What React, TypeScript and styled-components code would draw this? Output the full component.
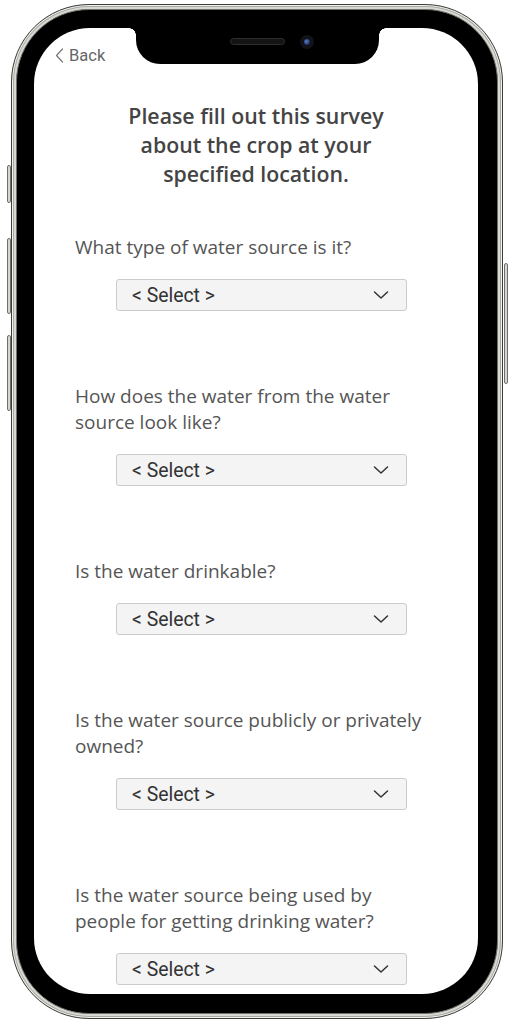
import { createGlobalStyle } from "styled-components"
import styled from "styled-components"

const GlobalStyle = createGlobalStyle`
  html, body {
    margin: 0;
    padding: 0;
    background: #ffffff;
  }
  * {
    box-sizing: border-box;
  }
`

const questions = [
  "What type of water source is it?",
  "How does the water from the water source look like?",
  "Is the water drinkable?",
  "Is the water source publicly or privately owned?",
  "Is the water source being used by people for getting drinking water?",
]

const Stage = styled.div`
  width: 512px;
  height: 1024px;
  padding: 4px 0 0 11px;
  overflow: hidden;
`

const Frame = styled.div`
  position: relative;
  width: 492px;
  height: 1015px;
  border-radius: 78px;
  border: 1px solid #3c3c3c;
  background: #d9d9d3;
  padding: 4px;
  box-shadow: inset 0 0 0 1px #f2f2ee, inset 0 0 0 2px #a9a9a4;
`

const SideButton = styled.div<{ $side: "left" | "right"; $top: number; $h: number }>`
  position: absolute;
  ${p => (p.$side === "left" ? "left: -5px;" : "right: -6px;")}
  top: ${p => p.$top}px;
  width: 4px;
  height: ${p => p.$h}px;
  border: 1px solid #6e6e6a;
  border-radius: 2px;
  background: linear-gradient(90deg, #bdbdb8, #efefea, #bdbdb8);
`

const Bezel = styled.div`
  width: 100%;
  height: 100%;
  border-radius: 73px;
  background: #000;
  border: 1px solid #6f6f6c;
  padding: 18px 19px 19px 17px;
`

const Screen = styled.div`
  position: relative;
  width: 100%;
  height: 100%;
  border-radius: 56px;
  background: #fff;
  overflow: hidden;
`

const Notch = styled.div`
  position: absolute;
  left: 102px;
  top: 0;
  width: 243px;
  height: 36px;
  background: #000;
  border-radius: 0 0 24px 24px;

  &::before,
  &::after {
    content: "";
    position: absolute;
    top: 0;
    width: 7px;
    height: 7px;
  }
  &::before {
    left: -7px;
    background: radial-gradient(circle at 0 100%, transparent 6.5px, #000 7px);
  }
  &::after {
    right: -7px;
    background: radial-gradient(circle at 100% 100%, transparent 6.5px, #000 7px);
  }
`

const Speaker = styled.div`
  position: absolute;
  left: 94px;
  top: 10px;
  width: 55px;
  height: 7px;
  border-radius: 4px;
  background: #141414;
  border: 1px solid #2e2e2e;
`

const Camera = styled.div`
  position: absolute;
  left: 164px;
  top: 7px;
  width: 14px;
  height: 14px;
  border-radius: 50%;
  background: #111318;
  display: flex;
  align-items: center;
  justify-content: center;

  &::after {
    content: "";
    width: 6px;
    height: 6px;
    border-radius: 50%;
    background: radial-gradient(circle at 40% 40%, #5b7fc4, #1d2f63 70%);
  }
`

const Content = styled.div`
  padding: 17px 41px 0 41px;
`

const BackRow = styled.div`
  display: flex;
  align-items: center;
  gap: 5px;
  height: 20px;
  margin-left: -20px;
  font-family: Roboto, "Liberation Sans", sans-serif;
  font-size: 16.5px;
  color: #666;
`

const Title = styled.h1`
  margin: 36px -10px 0;
  font-family: "Open Sans", "Noto Sans", sans-serif;
  font-weight: 600;
  font-size: 21.3px;
  line-height: 29px;
  text-align: center;
  color: #444;
`

const QuestionList = styled.div`
  margin-top: 46px;
  display: flex;
  flex-direction: column;
  gap: 72px;
`

const Question = styled.div`
  display: flex;
  flex-direction: column;
  gap: 19px;
`

const Label = styled.div`
  font-family: "Open Sans", "Noto Sans", sans-serif;
  font-size: 19px;
  line-height: 26px;
  color: #555;
`

const SelectBox = styled.button`
  margin-left: 41px;
  width: 291px;
  height: 32px;
  display: flex;
  align-items: center;
  justify-content: space-between;
  padding: 0 17px 0 15px;
  background: #f4f4f4;
  border: 1px solid #cbcbcb;
  border-radius: 3px;
  font-family: Roboto, "Liberation Sans", sans-serif;
  font-size: 19.4px;
  color: #333;
  cursor: pointer;
`

function Chevron() {
  return (
    <svg width="16" height="10" viewBox="0 0 16 10" fill="none">
      <polyline points="1.5,2 8,8 14.5,2" stroke="#333" strokeWidth="1.5" strokeLinecap="round" strokeLinejoin="round" />
    </svg>
  )
}

function BackChevron() {
  return (
    <svg width="9" height="15" viewBox="0 0 9 15" fill="none">
      <polyline points="7.5,1 1.5,7.5 7.5,14" stroke="#777" strokeWidth="1.2" strokeLinecap="round" strokeLinejoin="round" />
    </svg>
  )
}

export default function App() {
  return (
    <Stage>
      <GlobalStyle />
      <Frame>
        <SideButton $side="left" $top={160} $h={38} />
        <SideButton $side="left" $top={233} $h={76} />
        <SideButton $side="left" $top={330} $h={76} />
        <SideButton $side="right" $top={258} $h={121} />
        <Bezel>
          <Screen>
            <Notch>
              <Speaker />
              <Camera />
            </Notch>
            <Content>
              <BackRow>
                <BackChevron />
                <span>Back</span>
              </BackRow>
              <Title>
                Please fill out this survey
                <br />
                about the crop at your
                <br />
                specified location.
              </Title>
              <QuestionList>
                {questions.map(q => (
                  <Question key={q}>
                    <Label>{q}</Label>
                    <SelectBox type="button">
                      <span>&lt; Select &gt;</span>
                      <Chevron />
                    </SelectBox>
                  </Question>
                ))}
              </QuestionList>
            </Content>
          </Screen>
        </Bezel>
      </Frame>
    </Stage>
  )
}
